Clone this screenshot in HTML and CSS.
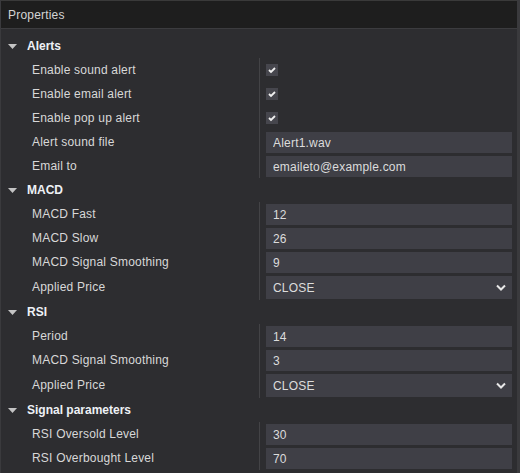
FILE: index.html
```html
<!DOCTYPE html>
<html lang="en">

<head>
  <meta charset="UTF-8" />
  <title>Properties</title>
  <link rel="stylesheet" href="styles.css">
</head>

<body>
  <div class="panel">
    <div class="title">Properties</div>

    <div class="list">
      <div class="section">
        <div class="section-head">
          <svg class="caret" width="9" height="5" viewBox="0 0 9 5"><polygon points="0,0 9,0 4.5,5" /></svg>
          Alerts
        </div>
        <div class="rows">
          <div class="label">Enable sound alert</div>
          <div class="value">
            <span class="check"><svg width="12" height="12" viewBox="0 0 12 12"><polyline points="3,6 5,8 9,4" /></svg></span>
          </div>
          <div class="label">Enable email alert</div>
          <div class="value">
            <span class="check"><svg width="12" height="12" viewBox="0 0 12 12"><polyline points="3,6 5,8 9,4" /></svg></span>
          </div>
          <div class="label">Enable pop up alert</div>
          <div class="value">
            <span class="check"><svg width="12" height="12" viewBox="0 0 12 12"><polyline points="3,6 5,8 9,4" /></svg></span>
          </div>
          <div class="label">Alert sound file</div>
          <div class="value"><input class="field" type="text" value="Alert1.wav" /></div>
          <div class="label">Email to</div>
          <div class="value"><input class="field" type="text" value="emaileto@example.com" /></div>
        </div>
      </div>

      <div class="section">
        <div class="section-head">
          <svg class="caret" width="9" height="5" viewBox="0 0 9 5"><polygon points="0,0 9,0 4.5,5" /></svg>
          MACD
        </div>
        <div class="rows">
          <div class="label">MACD Fast</div>
          <div class="value"><input class="field" type="text" value="12" /></div>
          <div class="label">MACD Slow</div>
          <div class="value"><input class="field" type="text" value="26" /></div>
          <div class="label">MACD Signal Smoothing</div>
          <div class="value"><input class="field" type="text" value="9" /></div>
          <div class="label tall">Applied Price</div>
          <div class="value tall">
            <div class="select">
              <span>CLOSE</span>
              <svg width="10" height="7" viewBox="0 0 10 7"><polyline points="1,1.5 5,5.5 9,1.5" /></svg>
            </div>
          </div>
        </div>
      </div>

      <div class="section">
        <div class="section-head">
          <svg class="caret" width="9" height="5" viewBox="0 0 9 5"><polygon points="0,0 9,0 4.5,5" /></svg>
          RSI
        </div>
        <div class="rows">
          <div class="label">Period</div>
          <div class="value"><input class="field" type="text" value="14" /></div>
          <div class="label">MACD Signal Smoothing</div>
          <div class="value"><input class="field" type="text" value="3" /></div>
          <div class="label tall">Applied Price</div>
          <div class="value tall">
            <div class="select">
              <span>CLOSE</span>
              <svg width="10" height="7" viewBox="0 0 10 7"><polyline points="1,1.5 5,5.5 9,1.5" /></svg>
            </div>
          </div>
        </div>
      </div>

      <div class="section">
        <div class="section-head">
          <svg class="caret" width="9" height="5" viewBox="0 0 9 5"><polygon points="0,0 9,0 4.5,5" /></svg>
          Signal parameters
        </div>
        <div class="rows">
          <div class="label">RSI Oversold Level</div>
          <div class="value"><input class="field" type="text" value="30" /></div>
          <div class="label">RSI Overbought Level</div>
          <div class="value"><input class="field" type="text" value="70" /></div>
        </div>
      </div>
    </div>
  </div>
</body>

</html>
```

FILE: styles.css
```css
* {
  box-sizing: border-box;
  margin: 0;
  padding: 0;
}

html,
body {
  height: 100%;
  overflow: hidden;
}

body {
  font-family: "Liberation Sans", Arial, sans-serif;
  font-size: 12px;
  letter-spacing: 0.2px;
  background-color: #2d2d30;
  color: #d6d6d6;
}

.panel {
  height: 100%;
  border-left: 1px solid #3a3a3d;
  border-right: 3px solid #3a3a3d;
  background-color: #2d2d30;
}

.title {
  height: 29px;
  line-height: 28px;
  padding-left: 7px;
  background-color: #1e1e1e;
  border-top: 1px solid #3a3a3a;
  border-bottom: 1px solid #3c3c3f;
  color: #d4d4d4;
}

.list {
  padding-top: 5px;
}

.section-head {
  display: flex;
  align-items: center;
  height: 24px;
  padding-left: 7px;
  font-weight: bold;
  letter-spacing: 0;
  color: #eef1f6;
}

.caret {
  margin-right: 10px;
  fill: #c4c4c4;
}

.rows {
  display: grid;
  grid-template-columns: 258px 1fr;
}

.label {
  display: flex;
  align-items: center;
  height: 24px;
  padding-left: 31px;
  color: #d8d8d8;
}

.value {
  height: 24px;
  padding: 2px 5px 0 6px;
  border-left: 1px solid #434346;
}

.tall {
  height: 26px;
}

/* checkbox */
.check {
  display: block;
  width: 12px;
  height: 12px;
  margin-top: 4px;
  background-color: #46464d;
}

.check svg {
  display: block;
  fill: none;
  stroke: #f0f0f0;
  stroke-width: 1.8;
}

.field {
  display: block;
  width: 100%;
  height: 21px;
  padding: 0 7px;
  border: none;
  outline: none;
  background-color: #3f3f46;
  color: #dcdcdc;
  font-family: inherit;
  font-size: 12px;
  letter-spacing: 0.2px;
}

.select {
  display: flex;
  justify-content: space-between;
  align-items: center;
  height: 23px;
  padding: 0 6px 0 7px;
  background-color: #3f3f46;
  color: #dcdcdc;
}

.select svg {
  fill: none;
  stroke: #e8e8e8;
  stroke-width: 2;
}
```
